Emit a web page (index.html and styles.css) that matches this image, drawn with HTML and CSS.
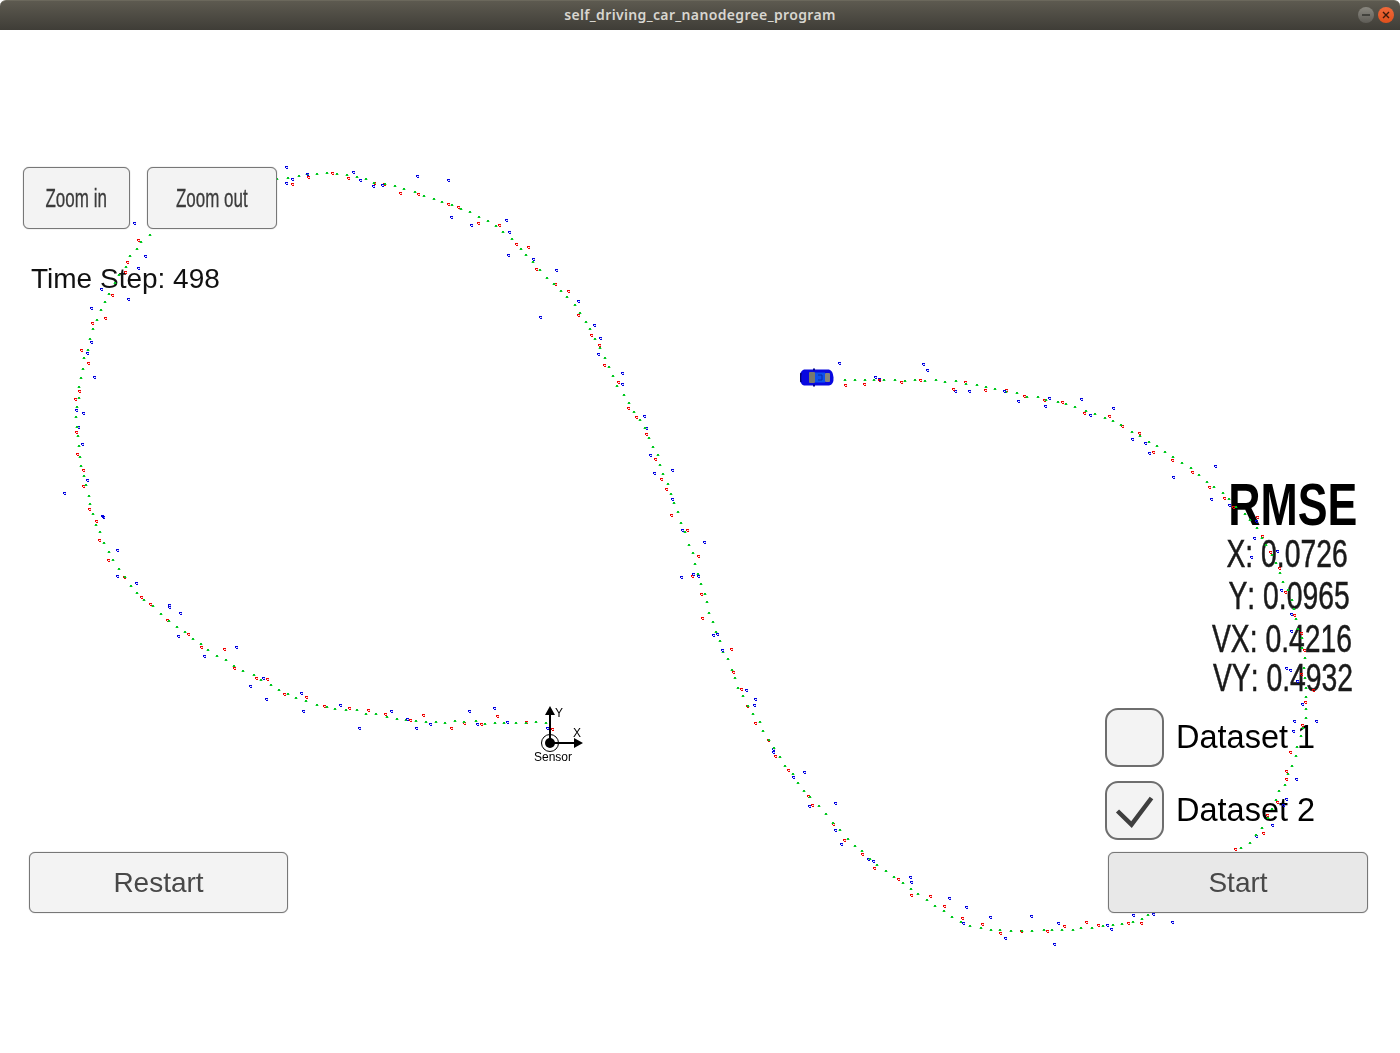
FILE: index.html
```html
<!DOCTYPE html>
<html lang="en">
<head>
  <meta charset="UTF-8" />
  <title>self_driving_car_nanodegree_program</title>
  <link rel="stylesheet" href="styles.css">
</head>
<body>
  <!-- Window title bar -->
  <div class="titlebar">
    <span class="title">self_driving_car_nanodegree_program</span>
    <div class="window-btns">
      <span class="win-btn win-min"><svg width="10" height="10" viewBox="0 0 10 10"><path d="M1 5h8" stroke="#2f2e2a" stroke-width="1.4"/></svg></span>
      <span class="win-btn win-close"><svg width="10" height="10" viewBox="0 0 10 10"><path d="M2 2l6 6M8 2l-6 6" stroke="#3a1a0c" stroke-width="1.4"/></svg></span>
    </div>
  </div>

  <div class="stage">
    <!-- Track markers, drawn by track.js -->
    <canvas id="trackCanvas" width="1400" height="1023"></canvas>

    <!-- Sensor axes -->
    <svg class="sensor" width="70" height="66" viewBox="0 0 70 66">
      <path d="M26 7v30M26 37h27" stroke="#000" stroke-width="2" fill="none"/>
      <path d="M26 0l-5 9h10zM59 37l-9-5v10z" fill="#000"/>
      <circle cx="26" cy="37" r="5" fill="#000"/>
      <circle cx="26" cy="37" r="8.5" stroke="#000" stroke-width="1" fill="none"/>
      <text x="31" y="11" class="sensor-axis">Y</text>
      <text x="49" y="31" class="sensor-axis">X</text>
      <text x="29" y="55" text-anchor="middle" class="sensor-label">Sensor</text>
    </svg>

    <!-- Car -->
    <svg class="car" width="34" height="19" viewBox="0 0 34 19">
      <path d="M4 1.500h25q4 1 4.500 8t-4.500 8h-25q-4-1-4-8t4-8z" fill="#0808e0"/>
      <path d="M1 5q-1 4.500 0 9" stroke="#000070" stroke-width="1.500" fill="none"/>
      <rect x="9" y="4" width="6" height="11" rx="1" fill="#77786f"/>
      <rect x="15" y="4.500" width="10" height="10" fill="#0c50ee"/>
      <path d="M18 7h4M18 12h4M22 7v5" stroke="#0628a8" stroke-width="1" fill="none"/>
      <rect x="25" y="5" width="5" height="9" rx="1" fill="#85857c"/>
      <path d="M13 0.500h2v2h-2zM13 16.500h2v2h-2z" fill="#000090"/>
    </svg>

    <div class="left-col">
      <div class="zoom-row">
        <button class="btn btn-zoom-in"><span class="squeeze">Zoom in</span></button>
        <button class="btn btn-zoom-out"><span class="squeeze">Zoom out</span></button>
      </div>
      <div class="time-step">Time Step: 498</div>
      <button class="btn btn-wide btn-restart">Restart</button>
    </div>

    <div class="right-col">
      <div class="rmse">
        <div class="rmse-title"><span>RMSE</span></div>
        <div class="rmse-line rmse-x"><span>X: 0.0726</span></div>
        <div class="rmse-line rmse-y"><span>Y: 0.0965</span></div>
        <div class="rmse-line rmse-vx"><span>VX: 0.4216</span></div>
        <div class="rmse-line rmse-vy"><span>VY: 0.4932</span></div>
      </div>
      <div class="dataset">
        <span class="checkbox"></span>
        <span class="dataset-label">Dataset 1</span>
      </div>
      <div class="dataset">
        <span class="checkbox">
          <svg width="43" height="36" viewBox="0 0 43 36"><path d="M4.500 18l14 13.500L38.500 5" stroke="#3f3f3f" stroke-width="4.500" fill="none"/></svg>
        </span>
        <span class="dataset-label">Dataset 2</span>
      </div>
      <button class="btn btn-wide btn-start">Start</button>
    </div>
  </div>

  <script src="track.js"></script>
</body>
</html>
```

FILE: styles.css
```css
html, body {
  margin: 0;
  padding: 0;
  background-color: #fff;
  color: #000;
  font-family: "Liberation Sans", Arial, sans-serif;
  overflow: hidden;
}

.titlebar {
  position: relative;
  height: 30px;
  padding-bottom: 2px;
  display: flex;
  align-items: center;
  justify-content: center;
  background: linear-gradient(#5d5a50, #3f3d37);
  border-top: 1px solid #6b685c;
  box-sizing: border-box;
  border-radius: 6px 6px 0 0;
}

.title {
  font-family: "Noto Sans", sans-serif;
  font-size: 14px;
  font-weight: 600;
  letter-spacing: 0.35px;
  color: #d8d6d0;
}

.window-btns {
  position: absolute;
  top: 6px;
  right: 6px;
  display: flex;
  gap: 4px;
}

.win-btn {
  width: 16px;
  height: 16px;
  border-radius: 50%;
  display: flex;
  align-items: center;
  justify-content: center;
}

.win-min {
  background: linear-gradient(#8a8880, #5e5c56);
}

.win-close {
  background: linear-gradient(#f0693a, #e0501c);
}

.stage {
  position: relative;
  height: 1023px;
  box-sizing: border-box;
  padding: 137px 32px 140px 23px;
  display: flex;
  justify-content: space-between;
}

#trackCanvas {
  position: absolute;
  top: 0;
  left: 0;
  z-index: 1;
  pointer-events: none;
}

.sensor {
  position: absolute;
  left: 524px;
  top: 676px;
  z-index: 1;
}

.sensor-axis {
  font-size: 12px;
  font-family: "Liberation Sans", sans-serif;
}

.sensor-label {
  font-size: 12px;
  font-family: "Liberation Sans", sans-serif;
}

.car {
  position: absolute;
  left: 800px;
  top: 338px;
  z-index: 1;
}

.left-col,
.right-col {
  display: flex;
  flex-direction: column;
}

.right-col {
  width: 263px;
  justify-content: flex-end;
}

.zoom-row {
  display: flex;
  gap: 17px;
}

.btn {
  position: relative;
  z-index: 2;
  box-sizing: border-box;
  border: 1px solid #777;
  border-radius: 6px;
  background-color: #f3f3f3;
  color: #3c3c3c;
  font-family: "Liberation Sans", Arial, sans-serif;
  padding: 0;
  box-shadow: 0 0 1px #888;
}

.btn-zoom-in,
.btn-zoom-out {
  height: 62px;
  font-size: 25px;
  filter: blur(0.3px);
}

.btn-zoom-in {
  width: 107px;
}

.btn-zoom-out {
  width: 130px;
}

.squeeze {
  display: inline-block;
  transform: scaleX(0.68);
  white-space: nowrap;
  -webkit-text-stroke: 0.3px #3c3c3c;
}

.time-step {
  font-size: 28px;
  line-height: 34px;
  margin: 33px 0 0 8px;
  color: #111;
  filter: blur(0.3px);
}

.btn-wide {
  height: 61px;
  font-size: 28px;
  color: #484848;
  filter: blur(0.3px);
}

.btn-restart {
  width: 259px;
  margin: auto 0 0 6px;
}

.btn-start {
  width: 260px;
  margin: 12px 0 0 3px;
  background-color: #e8e8e8;
}

.rmse {
  padding-right: 11px;
  text-align: right;
  filter: blur(0.5px);
  margin-bottom: 9px;
  font-kerning: none;
}

.rmse span {
  display: inline-block;
  transform-origin: right center;
  white-space: nowrap;
}

.rmse-title {
  font-size: 60px;
  font-weight: bold;
  line-height: 52px;
  margin-bottom: 3px;
}

.rmse-title span {
  transform: scaleX(0.745);
}

.rmse-line {
  font-size: 38px;
  line-height: 41.500px;
  color: #1a1a1a;
}

.rmse-line span {
  transform: scaleX(0.745);
  -webkit-text-stroke: 0.5px #1a1a1a;
}

.rmse-x {
  padding-right: 9px;
}

.rmse-y {
  padding-right: 7px;
}

.rmse-vx {
  padding-right: 5px;
  margin-top: 2px;
  margin-bottom: -3px;
}

.rmse-vy {
  padding-right: 4px;
}

.dataset {
  display: flex;
  align-items: center;
  gap: 12px;
  height: 59px;
  margin-bottom: 14px;
}

.dataset:last-of-type {
  margin-bottom: 0;
}

.checkbox {
  box-sizing: border-box;
  width: 59px;
  height: 59px;
  border: 2px solid #6e6e6e;
  border-radius: 13px;
  background-color: #f3f3f3;
  display: flex;
  align-items: center;
  justify-content: center;
}

.dataset-label {
  font-size: 32.500px;
  line-height: 58px;
  align-self: flex-start;
  color: #000;
  filter: blur(0.25px);
}
```

FILE: track.js
```js
// Control points of the figure eight, in stage coordinates (title bar excluded)
const track = [
  [545, 692], [500, 692], [455, 691], [410, 690], [360, 681], [305, 671], [265, 651],
  [220, 627], [180, 598], [140, 565], [110, 525], [90, 475], [80, 430], [76, 385],
  [82, 335], [100, 280], [130, 225], [165, 190], [220, 158], [280, 148], [330, 142],
  [380, 152], [440, 170], [495, 195], [540, 240], [570, 270], [590, 300], [620, 360],
  [645, 400], [665, 450], [690, 520], [715, 600], [740, 660], [760, 695], [800, 755],
  [860, 820], [920, 865], [970, 895], [1040, 900], [1100, 895], [1150, 883], [1237, 820],
  [1260, 797], [1280, 760], [1292, 733], [1303, 693], [1305, 670], [1303, 627],
  [1297, 592], [1280, 543], [1257, 500], [1227, 468], [1200, 445], [1160, 418],
  [1100, 385], [1040, 368], [960, 352], [900, 350], [840, 348]
];

const ctx = document.getElementById('trackCanvas').getContext('2d');

let seed = 1234567;
function rand() {
  seed = (seed * 16807) % 2147483647;
  return seed / 2147483647;
}

function noise(amount) {
  return (rand() + rand() - 1) * amount;
}

function catmull(p0, p1, p2, p3, t) {
  const t2 = t * t, t3 = t2 * t;
  return 0.5 * (2 * p1 + (p2 - p0) * t + (2 * p0 - 5 * p1 + 4 * p2 - p3) * t2 + (3 * p1 - p0 - 3 * p2 + p3) * t3);
}

function samplePath(step) {
  const fine = [];
  for (let i = 0; i < track.length - 1; i++) {
    const a = track[Math.max(i - 1, 0)], b = track[i], c = track[i + 1], d = track[Math.min(i + 2, track.length - 1)];
    for (let t = 0; t < 1; t += 0.02) {
      fine.push([catmull(a[0], b[0], c[0], d[0], t), catmull(a[1], b[1], c[1], d[1], t)]);
    }
  }
  const out = [fine[0]];
  let left = step;
  for (let i = 1; i < fine.length; i++) {
    left -= Math.hypot(fine[i][0] - fine[i - 1][0], fine[i][1] - fine[i - 1][1]);
    if (left <= 0) {
      out.push(fine[i]);
      left = step;
    }
  }
  return out;
}

function greenMark(x, y) {
  ctx.fillStyle = '#00c81e';
  ctx.fillRect(x, y, 2, 2);
  ctx.fillStyle = 'rgba(0, 200, 30, 0.35)';
  ctx.fillRect(x - 1, y + 1, 1, 1);
  ctx.fillRect(x + 2, y + 1, 1, 1);
}

function ringMark(x, y, color) {
  ctx.fillStyle = color;
  ctx.fillRect(x, y, 3, 1);
  ctx.fillRect(x, y + 1, 1, 1);
  ctx.fillRect(x + 1, y + 2, 2, 1);
  ctx.globalAlpha = 0.35;
  ctx.fillRect(x + 2, y + 1, 1, 1);
  ctx.globalAlpha = 1;
}

const points = samplePath(9.5);
points.forEach(function(p, i) {
  const x = Math.round(p[0] + noise(1.5));
  const y = Math.round(p[1] + noise(1.5));
  if (i % 2 === 0) {
    ringMark(Math.round(p[0] + noise(9)), Math.round(p[1] + noise(9)), '#f00000');
  } else {
    const spread = rand() < 0.15 ? 40 : 20;
    ringMark(Math.round(p[0] + noise(spread)), Math.round(p[1] + noise(spread)), '#0000e0');
  }
  greenMark(x, y);
});
```
